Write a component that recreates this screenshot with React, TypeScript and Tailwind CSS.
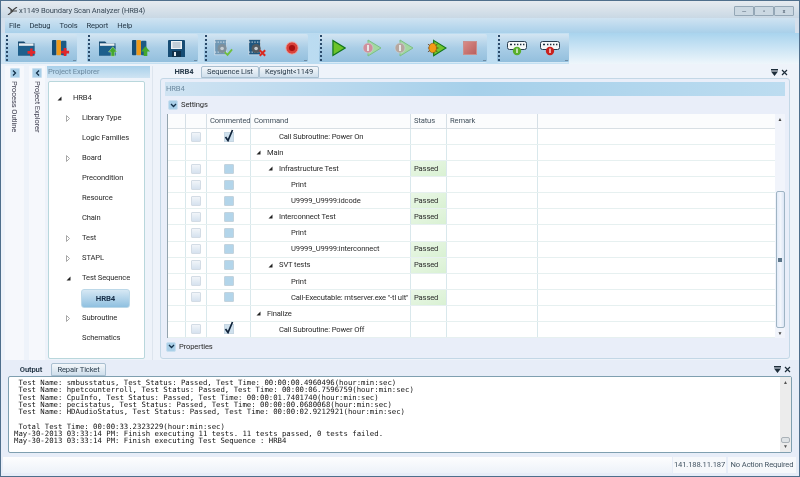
import { ReactNode } from "react";

const ui = "font-['Roboto',sans-serif] tracking-[-0.13px]";

function Grip() {
  return <div className="w-[2px] h-[26px] ml-[1px] shrink-0 border-l-2 border-dotted border-[#2a4a6a]" />;
}

function ToolGroup({ children, width }: { children: ReactNode; width: string }) {
  return (
    <div className={`${width} h-[29px] flex items-center bg-gradient-to-b from-[#d3e5f2] via-[#a9cde6] to-[#93bfdd] rounded-[2px] border-b border-[#d8eaf6]`}>
      <Grip />
      {children}
      <div className="ml-auto mr-[1px] self-end mb-[1px] w-[3px] h-[3px] border-b border-[#6d8ba3]" />
    </div>
  );
}

function FolderIcon({ up }: { up?: boolean }) {
  return (
    <svg width="21" height="19" viewBox="0 0 24 22">
      <path d="M1 3h7l2 2h10v14H1z" fill="#16496f" />
      <path d="M2 5h17v3H2z" fill="#e8eef3" />
      <path d="M1 8h19v11H1z" fill="#1d5f8c" />
      {up ? (
        <path d="M17 9l5 6h-3v5h-4v-5h-3z" fill="#44a82e" stroke="#d7f0c8" strokeWidth="0.5" />
      ) : (
        <path d="M15 11h3v3h3v3h-3v3h-3v-3h-3v-3h3z" fill="#e2262a" />
      )}
    </svg>
  );
}

function BooksIcon({ up }: { up?: boolean }) {
  return (
    <svg width="20" height="18" viewBox="0 0 22 20">
      <rect x="1" y="1" width="5" height="17" rx="1" fill="#154e78" />
      <rect x="6" y="1" width="5" height="17" rx="1" fill="#ef9a1a" />
      <rect x="11" y="2" width="6" height="16" rx="1" fill="#1c5a84" />
      {up ? (
        <path d="M16 8l5 6h-3v5h-4v-5h-3z" fill="#44a82e" />
      ) : (
        <path d="M14 10h3v3h3v3h-3v3h-3v-3h-3v-3h3z" fill="#e2262a" />
      )}
    </svg>
  );
}

function FloppyIcon() {
  return (
    <svg width="19" height="19" viewBox="0 0 19 19">
      <path d="M1 2a1 1 0 0 1 1-1h15a1 1 0 0 1 1 1v16H1z" fill="#164c74" />
      <rect x="4" y="2" width="11" height="8" fill="#eef2f5" />
      <path d="M5.5 4h8M5.5 6h8M5.5 8h8" stroke="#7d97ab" strokeWidth="0.8" />
      <rect x="5" y="12" width="9" height="6" fill="#0e2f49" />
      <rect x="7" y="13" width="2" height="4" fill="#dfe7ed" />
    </svg>
  );
}

function ChipIcon({ bad }: { bad?: boolean }) {
  return (
    <svg width="20" height="20" viewBox="0 0 22 21">
      <rect x="2" y="1" width="13" height="17" fill={bad ? "#1f567f" : "#6f97b4"} stroke="#dfe9f1" strokeWidth="0.7" />
      <path d="M2 4h13M2 15h13" stroke="#e6edf3" strokeWidth="1" strokeDasharray="1.5 1.5" />
      <circle cx="10" cy="11" r="5" fill={bad ? "#52595f" : "#7f8f9a"} />
      <circle cx="10" cy="11" r="2" fill="#c4ccd2" />
      {bad ? (
        <path d="M14 13l6 6M20 13l-6 6" stroke="#d9281f" strokeWidth="2.2" />
      ) : (
        <path d="M13 15l3 3 5-6" fill="none" stroke="#6fbf3e" strokeWidth="2" />
      )}
    </svg>
  );
}

function RecordIcon() {
  return (
    <svg width="14" height="14" viewBox="0 0 16 16">
      <circle cx="8" cy="8" r="7" fill="#d9413a" stroke="#f0a49c" strokeWidth="1" />
      <circle cx="8" cy="8" r="3.5" fill="#a80f10" />
    </svg>
  );
}

function PlayIcon() {
  return (
    <svg width="14" height="18" viewBox="0 0 15 18">
      <path d="M1 1l13 8-13 8z" fill="#6cc32a" stroke="#12761c" strokeWidth="1.3" />
    </svg>
  );
}

function DimPlayIcon({ color }: { color: string }) {
  return (
    <svg width="20" height="18" viewBox="0 0 20 18">
      <path d="M6 1l13 8-13 8z" fill="#a3d8a0" stroke="#7cbf86" strokeWidth="1" />
      <circle cx="6" cy="9" r="5" fill={color} stroke="#c9d5dc" strokeWidth="0.6" />
      <rect x="5" y="6" width="2" height="6" fill="#e8e8e8" />
    </svg>
  );
}

function BugPlayIcon() {
  return (
    <svg width="20" height="18" viewBox="0 0 21 18">
      <path d="M7 1l13 8-13 8z" fill="#71c52d" stroke="#12761c" strokeWidth="1.2" />
      <path d="M1 5l3 2M1 9h3M1 13l3-2M11 5l-3 2M12 9H9M11 13l-3-2" stroke="#5a2c00" strokeWidth="0.8" />
      <ellipse cx="6" cy="9" rx="4" ry="5" fill="#f39a14" stroke="#8b4b05" strokeWidth="0.6" />
    </svg>
  );
}

function StopIcon() {
  return <div className="w-[14px] h-[14px] bg-gradient-to-br from-[#d98b86] to-[#b9605f] border border-[#c98f8c]" />;
}

function PortIcon({ bad }: { bad?: boolean }) {
  return (
    <svg width="20" height="15" viewBox="0 0 20 15">
      <rect x="0.5" y="0.5" width="19" height="8" rx="2" fill="#f5f7f8" stroke="#2a3e50" />
      <path d="M3 3.5h2M7 3.5h1.4M10 3.5h1.4M13 3.5h1.4M16 3.5h1.4" stroke="#1c2c3a" strokeWidth="1.6" />
      <circle cx="10" cy="10" r="4.2" fill={bad ? "#c9221e" : "#58ae2c"} />
      <rect x="9.4" y="7.5" width="1.2" height="4.5" fill="#fff" />
    </svg>
  );
}

function Expander() {
  return (
    <div className="w-[10px] h-[10px] rounded-[2px] bg-[#a9cfe8] border border-[#c8dff0] flex items-center justify-center">
      <svg width="7" height="5" viewBox="0 0 7 5">
        <path d="M1 1l2.5 2.5L6 1" fill="none" stroke="#12304a" strokeWidth="1.3" />
      </svg>
    </div>
  );
}

function SideButton({ d }: { d: string }) {
  return (
    <div className="w-[10px] h-[10px] shrink-0 rounded-[1px] bg-[#a9cfe8] border border-[#c8dff0] flex items-center justify-center">
      <svg width="5" height="6" viewBox="0 0 5 6">
        <path d={d} fill="none" stroke="#12304a" strokeWidth="1.3" />
      </svg>
    </div>
  );
}

function Solid() {
  return (
    <svg width="5" height="5" viewBox="0 0 5 5" className="shrink-0">
      <path d="M4.5 0.5v4h-4z" fill="#222" />
    </svg>
  );
}

function Hollow() {
  return (
    <svg width="4" height="7" viewBox="0 0 4 7" className="shrink-0">
      <path d="M0.5 0.5l3 3-3 3z" fill="none" stroke="#a8a8a8" />
    </svg>
  );
}

function PaneButtons() {
  return (
    <div className="flex items-center gap-[3px]">
      <svg width="7" height="7" viewBox="0 0 7 7">
        <path d="M0 0h7v1.5H0zM0 2.5h7L3.5 7z" fill="#1d2d3a" />
      </svg>
      <svg width="7" height="7" viewBox="0 0 7 7">
        <path d="M1 1l5 5M6 1L1 6" stroke="#1d2d3a" strokeWidth="1.2" />
      </svg>
    </div>
  );
}

const treeItems = [
  { label: "Library Type", mark: "hollow" },
  { label: "Logic Families" },
  { label: "Board", mark: "hollow" },
  { label: "Precondition" },
  { label: "Resource" },
  { label: "Chain" },
  { label: "Test", mark: "hollow" },
  { label: "STAPL", mark: "hollow" },
  { label: "Test Sequence", mark: "solid" },
];

function TreeRow({ label, mark }: { label: string; mark?: string }) {
  return (
    <div className="h-[20px] flex items-center text-[7.6px] text-[#2a2a2a]">
      <div className="w-[16px] ml-[17px] flex items-center">
        {mark === "hollow" && <Hollow />}
        {mark === "solid" && <Solid />}
      </div>
      <span>{label}</span>
    </div>
  );
}

type Row = {
  text: string;
  indent: string;
  arrow?: boolean;
  boxes?: boolean;
  checked?: boolean;
  passed?: boolean;
};

const rows: Row[] = [
  { text: "Call Subroutine: Power On", indent: "pl-[28px]", boxes: true, checked: true },
  { text: "Main", indent: "pl-[5px]", arrow: true },
  { text: "Infrastructure Test", indent: "pl-[17px]", arrow: true, boxes: true, passed: true },
  { text: "Print", indent: "pl-[40px]", boxes: true },
  { text: "U9999_U9999:idcode", indent: "pl-[40px]", boxes: true, passed: true },
  { text: "Interconnect Test", indent: "pl-[17px]", arrow: true, boxes: true, passed: true },
  { text: "Print", indent: "pl-[40px]", boxes: true },
  { text: "U9999_U9999:interconnect", indent: "pl-[40px]", boxes: true, passed: true },
  { text: "SVT tests", indent: "pl-[17px]", arrow: true, boxes: true, passed: true },
  { text: "Print", indent: "pl-[40px]", boxes: true },
  { text: 'Call-Executable: mtserver.exe "-tl ult"', indent: "pl-[40px]", boxes: true, passed: true },
  { text: "Finalize", indent: "pl-[5px]", arrow: true },
  { text: "Call Subroutine: Power Off", indent: "pl-[28px]", boxes: true, checked: true },
];

function Box({ tone }: { tone: "plain" | "blue" }) {
  return (
    <div
      className={`w-[10px] h-[10px] rounded-[1px] border ${
        tone === "blue"
          ? "bg-[#b3d5ea] border-[#c3d3dd]"
          : "bg-gradient-to-b from-[#f1f5f9] to-[#d6e2ef] border-[#d3dce5]"
      }`}
    />
  );
}

function CheckedBox() {
  return (
    <div className="w-[10px] h-[10px] bg-[#cfe1ee] border border-[#c6d6e2] flex items-center justify-center">
      <svg width="10" height="13" viewBox="0 0 10 13" className="-mt-[3px] shrink-0">
        <path d="M1.5 8l2.5 3.5L8.5 1" fill="none" stroke="#10233a" strokeWidth="1.7" />
      </svg>
    </div>
  );
}

function TableRow({ row }: { row: Row }) {
  return (
    <div className="h-[16.1px] flex border-b border-[#e6f0f0] text-[7.6px] text-[#2a2a2a]">
      <div className="w-[18px] border-r border-[#d9e8ec]" />
      <div className="w-[21px] border-r border-[#d9e8ec] flex items-center justify-center">
        {row.boxes && <Box tone="plain" />}
      </div>
      <div className="w-[44px] border-r border-[#d9e8ec] flex items-center justify-center">
        {row.boxes && (row.checked ? <CheckedBox /> : <Box tone="blue" />)}
      </div>
      <div className={`w-[160px] border-r border-[#d9e8ec] flex items-center gap-[6px] whitespace-nowrap ${row.indent}`}>
        {row.arrow && <Solid />}
        <span>{row.text}</span>
      </div>
      <div
        className={`w-[36px] border-r border-[#d9e8ec] flex items-center pl-[3px] ${
          row.passed ? "bg-gradient-to-br from-[#eaf7e6] to-[#d9f1d3]" : ""
        }`}
      >
        {row.passed && "Passed"}
      </div>
      <div className="w-[91px] border-r border-[#d9e8ec]" />
      <div className="flex-1" />
    </div>
  );
}

function TableHead({ label, width }: { label?: string; width: string }) {
  return (
    <div className={`${width} border-r border-[#d5dfe6] flex items-center pl-[3px]`}>{label}</div>
  );
}

function TableScroll() {
  return (
    <div className="w-[10px] bg-[#f1f4fb] flex flex-col items-center">
      <div className="h-[10px] text-[5px] leading-[10px] text-[#444]">▲</div>
      <div className="h-[67px]" />
      <div className="w-[9px] h-[137px] rounded-[2px] border border-[#9fb4c4] bg-gradient-to-r from-[#e2ebf8] via-[#f3f6fc] to-[#dbe6f5] flex items-center justify-center">
        <div className="w-[4px] h-[4px] border-y border-[#5b7488] bg-[#5b7488]" />
      </div>
      <div className="h-[10px] text-[5px] leading-[10px] text-[#444]">▼</div>
    </div>
  );
}

const outputLines = [
  " Test Name: smbusstatus, Test Status: Passed, Test Time: 00:00:00.4960496(hour:min:sec)",
  " Test Name: hpetcounterroll, Test Status: Passed, Test Time: 00:00:06.7596759(hour:min:sec)",
  " Test Name: CpuInfo, Test Status: Passed, Test Time: 00:00:01.7401740(hour:min:sec)",
  " Test Name: pecistatus, Test Status: Passed, Test Time: 00:00:00.0680068(hour:min:sec)",
  " Test Name: HDAudioStatus, Test Status: Passed, Test Time: 00:00:02.9212921(hour:min:sec)",
  " ",
  " Total Test Time: 00:00:33.2323229(hour:min:sec)",
  "May-30-2013 03:33:14 PM: Finish executing 11 tests. 11 tests passed, 0 tests failed.",
  "May-30-2013 03:33:14 PM: Finish executing Test Sequence : HRB4",
];

export default function App() {
  return (
    <div className={`${ui} w-[800px] h-[477px] overflow-hidden flex flex-col border border-[#4f6f8c] bg-[#d5e0ec] blur-[0.4px]`}>
      {/* title bar */}
      <div className="h-[17px] shrink-0 flex items-center pt-[3px] pl-[6px] pr-[5px] bg-gradient-to-b from-[#e6ebf0] to-[#c9d8e4] text-[7.6px] text-[#3a4a58]">
        <svg width="11" height="8" viewBox="0 0 11 8" className="mr-[1px]">
          <path d="M1 0l5 4-5 4M3 4h7M10 0L6 3" fill="none" stroke="#444" strokeWidth="1.2" />
        </svg>
        <span>x1149 Boundary Scan Analyzer (HRB4)</span>
        <div className="ml-auto flex">
          {["—", "▫", "x"].map((c) => (
            <div key={c} className="w-[20px] h-[10px] rounded-[1px] border border-[#94a7b6] bg-[#cbd8e2] text-[6px] leading-[8px] text-center text-[#456]">
              {c}
            </div>
          ))}
        </div>
      </div>

      {/* menu */}
      <div className="h-[15px] shrink-0 mx-[4px] flex items-center gap-[9px] pl-[4px] bg-gradient-to-b from-[#cfe3f1] to-[#a9d0ea] text-[7.6px] text-[#1f3140]">
        {["File", "Debug", "Tools", "Report", "Help"].map((m) => (
          <span key={m}>{m}</span>
        ))}
      </div>

      {/* toolbar */}
      <div className="h-[31px] shrink-0 pl-[4px] flex items-center bg-gradient-to-r from-[#cfe4f3] via-[#b5d9f0] to-[#dcecf7]">
        <ToolGroup width="w-[72px] mr-[10px]">
          <div className="ml-[9px]"><FolderIcon /></div>
          <div className="ml-[13px]"><BooksIcon /></div>
        </ToolGroup>
        <ToolGroup width="w-[111px] mr-[6px]">
          <div className="ml-[8px]"><FolderIcon up /></div>
          <div className="ml-[12px]"><BooksIcon up /></div>
          <div className="ml-[16px]"><FloppyIcon /></div>
        </ToolGroup>
        <ToolGroup width="w-[104px] mr-[11px]">
          <div className="ml-[6px]"><ChipIcon /></div>
          <div className="ml-[14px]"><ChipIcon bad /></div>
          <div className="ml-[18px]"><RecordIcon /></div>
        </ToolGroup>
        <ToolGroup width="w-[168px] mr-[10px]">
          <div className="ml-[10px]"><PlayIcon /></div>
          <div className="ml-[16px]"><DimPlayIcon color="#d08f9d" /></div>
          <div className="ml-[12px]"><DimPlayIcon color="#b6a79f" /></div>
          <div className="ml-[13px]"><BugPlayIcon /></div>
          <div className="ml-[16px]"><StopIcon /></div>
        </ToolGroup>
        <ToolGroup width="w-[72px]">
          <div className="ml-[7px]"><PortIcon /></div>
          <div className="ml-[13px]"><PortIcon bad /></div>
        </ToolGroup>
        <div className="flex-1 h-full bg-gradient-to-b from-[#a9d4ee] to-[#eef6fb]" />
      </div>

      {/* workspace */}
      <div className="h-[296px] shrink-0 flex pt-[2px] bg-[#eef3fa]">
        <div className="w-[19px] ml-[4px] bg-[#f6f8fc] flex flex-col items-center pt-[2px] gap-[3px]">
          <SideButton d="M1 0.5l2.5 2.5L1 5.5" />
          <span className="[writing-mode:vertical-rl] text-[7.6px] text-[#445]">Process Outline</span>
        </div>
        <div className="w-[16px] ml-[5px] bg-[#f6f8fc] flex flex-col items-center pt-[2px] gap-[3px]">
          <SideButton d="M4 0.5L1.5 3 4 5.5" />
          <span className="[writing-mode:vertical-rl] text-[7.6px] text-[#445]">Project Explorer</span>
        </div>

        <div className="w-[103px] ml-[2px] flex flex-col">
          <div className="h-[12px] shrink-0 bg-gradient-to-b from-[#a8d0ea] to-[#cfe4f3] text-[7.6px] leading-[12px] pl-[1px] text-[#6d8aa0]">
            Project Explorer
          </div>
          <div className="w-[97px] flex-1 mt-[3px] ml-[1px] mb-[1px] bg-white border border-[#b9d7dc] rounded-[2px] pt-[6px]">
            <div className="h-[20px] flex items-center text-[7.6px] text-[#2a2a2a]">
              <div className="ml-[8px] w-[16px]"><Solid /></div>
              <span>HRB4</span>
            </div>
            {treeItems.map((t) => (
              <TreeRow key={t.label} label={t.label} mark={t.mark} />
            ))}
            <div className="h-[20px] flex items-center pl-[32px]">
              <div className="w-[49px] h-[19px] rounded-[3px] border border-[#bcd8e8] bg-gradient-to-b from-[#d6e8f4] to-[#8fc0e0] text-[7.8px] font-bold text-center leading-[17px] text-[#18304a]">
                HRB4
              </div>
            </div>
            <TreeRow label="Subroutine" mark="hollow" />
            <TreeRow label="Schematics" />
          </div>
        </div>

        <div className="w-[1px] ml-[2px] mr-[7px] bg-[#dde5ee]" />

        {/* main panel */}
        <div className="w-[633px] flex flex-col">
          <div className="h-[12px] shrink-0 flex items-end pl-[7px] text-[7.6px] text-[#2a3c4c]">
            <div className="w-[34px] h-[12px] bg-[#eef3fa] text-center font-bold leading-[12px]">HRB4</div>
            <div className="w-[58px] h-[12px] bg-gradient-to-b from-[#f4f7fa] to-[#cfdfec] border border-[#a9bfd0] rounded-t-[2px] text-center leading-[10px]">Sequence List</div>
            <div className="w-[60px] h-[12px] bg-gradient-to-b from-[#f4f7fa] to-[#cfdfec] border border-[#a9bfd0] rounded-t-[2px] text-center leading-[10px]">Keysight&lt;1149</div>
            <div className="ml-auto mr-[5px] mb-[2px]"><PaneButtons /></div>
          </div>
          <div className="flex-1 flex flex-col mr-[3px] mb-[1px] bg-[#e9eef9] border border-[#c3d7e6] rounded-[3px] px-[4px] pt-[3px]">
            <div className="h-[14px] shrink-0 bg-gradient-to-r from-[#cfe3f2] via-[#a6d0ea] to-[#bcdcf0] text-[7.6px] leading-[14px] pl-[1px] text-[#6d8aa0]">HRB4</div>
            <div className="h-[18px] shrink-0 flex items-center gap-[3px] pl-[3px] text-[7.6px] text-[#2a2a2a]">
              <Expander />
              <span>Settings</span>
            </div>
            <div className="h-[224px] shrink-0 flex ml-[2px] bg-white border-l border-[#93a3ae]">
              <div className="flex-1 flex flex-col">
                <div className="h-[15px] shrink-0 flex border-b border-[#d8dfe4] bg-[#fbfcfd] text-[7.6px] text-[#44525e]">
                  <TableHead width="w-[18px]" />
                  <TableHead width="w-[21px]" />
                  <TableHead width="w-[44px]" label="Commented" />
                  <TableHead width="w-[160px]" label="Command" />
                  <TableHead width="w-[36px]" label="Status" />
                  <TableHead width="w-[91px]" label="Remark" />
                </div>
                {rows.map((r, i) => (
                  <TableRow key={i} row={r} />
                ))}
              </div>
              <TableScroll />
            </div>
            <div className="h-[17px] shrink-0 flex items-center gap-[3px] pl-[1px] text-[7.6px] text-[#2a2a2a]">
              <Expander />
              <span>Properties</span>
            </div>
          </div>
        </div>
      </div>

      {/* output */}
      <div className="h-[96px] shrink-0 flex flex-col px-[7px] pt-[2px] bg-[#e7edf8]">
        <div className="h-[14px] shrink-0 flex items-end pl-[3px] text-[7.6px] text-[#2a3c4c]">
          <div className="w-[40px] text-center font-bold leading-[13px]">Output</div>
          <div className="w-[55px] h-[13px] bg-gradient-to-b from-[#f4f7fa] to-[#cfdfec] border border-[#a9bfd0] rounded-t-[2px] text-center leading-[11px]">Repair Ticket</div>
          <div className="ml-auto mr-[1px] mb-[3px]"><PaneButtons /></div>
        </div>
        <div className="h-[77px] flex shrink-0 bg-white border border-[#7f9fb0] rounded-[2px]">
          <pre className="flex-1 pt-[2px] pl-[5px] font-['DejaVu_Sans_Mono',monospace] tracking-normal text-[7.3px] leading-[7.25px] text-[#111]">
            {outputLines.join("\n")}
          </pre>
          <div className="w-[11px] bg-[#ececec] flex flex-col items-center text-[5px] text-[#555]">
            <span className="mt-[2px]">▲</span>
            <div className="mt-auto w-[9px] h-[6px] rounded-[2px] bg-[#dfe3e6] border border-[#aab2b8]" />
            <span className="mb-[2px]">▼</span>
          </div>
        </div>
      </div>

      {/* status */}
      <div className="flex-1 flex items-start justify-end pr-[3px] pl-[2px] bg-[#e7edf8] text-[7.6px] text-[#445563]">
        <div className="flex-1 h-[16px] mt-[1px] bg-gradient-to-b from-[#fdfdfe] to-[#edf2f9]" />
        <div className="h-[16px] mt-[1px] ml-[1px] w-[53px] bg-[#f6f8fb] leading-[16px] text-center">141.188.11.187</div>
        <div className="h-[16px] mt-[1px] ml-[2px] w-[68px] bg-[#f6f8fb] leading-[16px] text-center">No Action Required</div>
      </div>
    </div>
  );
}
